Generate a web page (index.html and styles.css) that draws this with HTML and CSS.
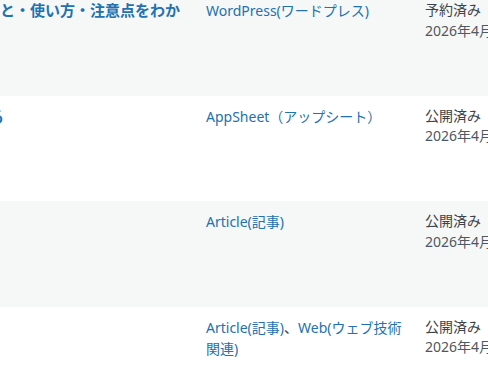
FILE: index.html
```html
<!DOCTYPE html>
<html lang="ja">
<head>
<meta charset="utf-8">
<link rel="stylesheet" href="styles.css">
</head>
<body>
<div class="list">
  <div class="row alt">
    <div class="cell title"><span class="line">メリット・デメリットと・使い方・注意点をわか</span></div>
    <div class="cell cat"><a href="#">WordPress(ワードプレス)</a></div>
    <div class="cell date"><div>予約済み</div><div class="when">2026年4月1日 10:00</div></div>
  </div>
  <div class="row">
    <div class="cell title"><span class="line shift">アップシートの基本を解説する</span></div>
    <div class="cell cat"><a href="#">AppSheet（アップシート）</a></div>
    <div class="cell date"><div>公開済み</div><div class="when">2026年4月1日 10:00</div></div>
  </div>
  <div class="row alt">
    <div class="cell title"></div>
    <div class="cell cat"><a href="#">Article(記事)</a></div>
    <div class="cell date"><div>公開済み</div><div class="when">2026年4月1日 10:00</div></div>
  </div>
  <div class="row">
    <div class="cell title"></div>
    <div class="cell cat"><a href="#">Article(記事)</a>、<a href="#">Web(ウェブ技術関連)</a></div>
    <div class="cell date"><div>公開済み</div><div class="when">2026年4月1日 10:00</div></div>
  </div>
</div>
</body>
</html>
```
FILE: styles.css
```css
html, body {
  margin: 0;
  padding: 0;
  background: #ffffff;
  overflow: hidden;
}
body {
  width: 488px;
  height: 386px;
  font-family: "Noto Sans", "Noto Sans CJK JP", sans-serif;
  font-size: 14px;
  color: #3c434a;
}
.list {
  margin-top: -10px;
  width: 488px;
}
.row {
  display: flex;
  height: 105.5px;
  background: #ffffff;
}
.row.alt {
  background: #f6f7f7;
}
.cell {
  padding: 10px 11px 0 11px;
  line-height: 21px;
  box-sizing: border-box;
  flex: none;
}
.title {
  width: 195px;
  padding: 10px 15px 0 0;
  overflow: hidden;
  display: flex;
  justify-content: flex-end;
  align-items: flex-start;
}
.title .line {
  white-space: nowrap;
  font-weight: 700;
  font-size: 15px;
  color: #2271b1;
  flex: none;
}
.title .line.shift {
  margin-right: 176px;
}
.cat {
  width: 219px;
}
.cat a {
  color: #2271b1;
  text-decoration: none;
}
.date {
  width: 120px;
  white-space: nowrap;
  line-height: 20.5px;
}
.when {
  color: #50575e;
}
```
